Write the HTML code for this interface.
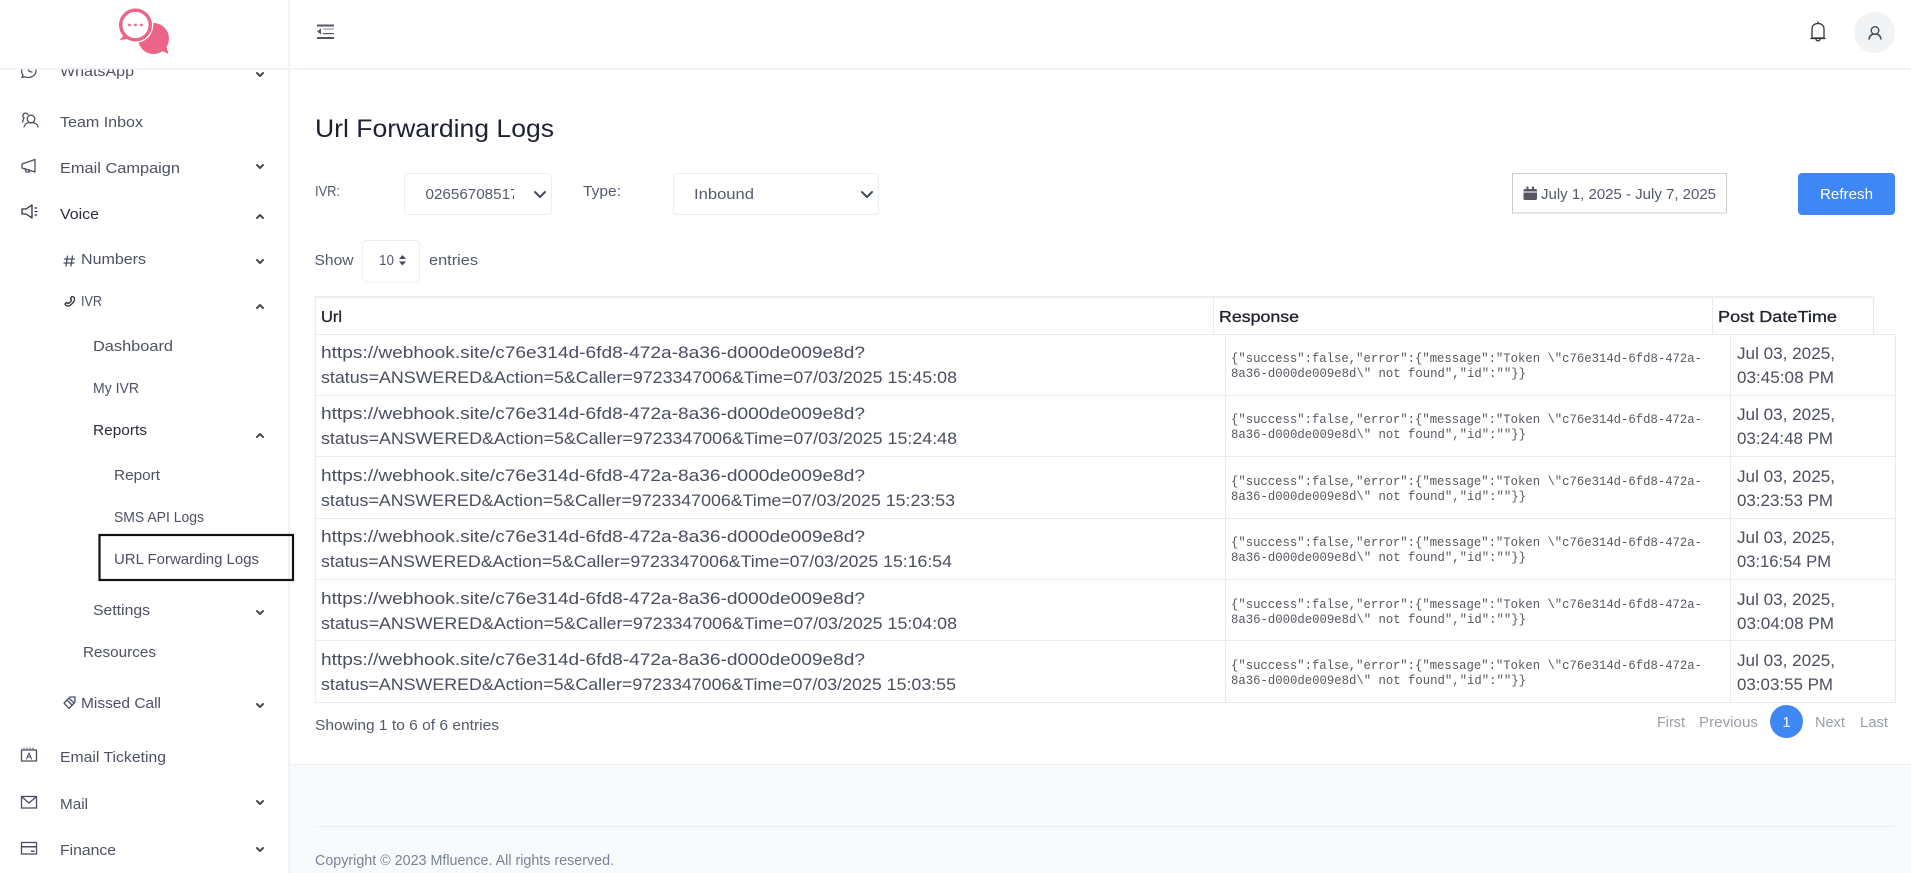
<!DOCTYPE html>
<html lang="en">
<head>
<meta charset="utf-8">
<title>Url Forwarding Logs</title>
<style>
html,body{margin:0;padding:0;width:1911px;height:873px;overflow:hidden;background:#fff}
svg{display:block}
text{font-family:"Liberation Sans",sans-serif;white-space:pre}
.nav{font-size:15px;fill:#4d5162}
.dark{font-size:15px;fill:#2a2d3a}
.lab{font-size:14.5px;fill:#555a6a}
.url{font-size:16.5px;fill:#4a4e5e}
.mono{font-family:"Liberation Mono",monospace;font-size:12.6px;fill:#55585f}
.th{font-size:16px;fill:#20232e;stroke:#20232e;stroke-width:.3}
.pg{font-size:14.5px;fill:#9a9ea9}
.ic{fill:none;stroke:#4a4f60;stroke-width:1.3;stroke-linecap:round;stroke-linejoin:round}
.ch{fill:none;stroke:#4a4a4a;stroke-width:2;stroke-linecap:round;stroke-linejoin:round}
</style>
</head>
<body>
<svg width="1911" height="873" viewBox="0 0 1911 873" xmlns="http://www.w3.org/2000/svg">
<rect width="1911" height="873" fill="#fff"/>
<!-- main background -->
<rect x="288" y="69" width="1623" height="804" fill="#f9fafc"/>
<rect x="288" y="0" width="2" height="873" fill="#eef2f9"/>
<rect x="290" y="70" width="1621" height="694" rx="4" fill="#fff"/>
<rect x="290" y="764" width="1621" height="1" fill="#eef1f7"/>

<!-- sidebar -->
<g>
<path class="ic" d="M22 67c-1 5 0 7 1 8l-1 2.500 3-.7c5 2 11-1 11-6 0-2-.5-3-1-4M28 68c0 3 2 4 4 4"/>
<text class="nav" x="60" y="76" textLength="74" lengthAdjust="spacingAndGlyphs">WhatsApp</text>
<path class="ch" d="M257 73l3 3 3-3"/>

<circle class="ic" cx="31" cy="119" r="3.800"/>
<path class="ic" d="M24 127c1-4 4-4.500 7-4.500s6 .5 7 4.500M28 114.500c-1-1.500-3-2-4.500-.5-1 1.500-.5 3 .5 4l-1.500 4"/>
<text class="nav" x="60" y="127" textLength="83" lengthAdjust="spacingAndGlyphs">Team Inbox</text>

<path class="ic" d="M22 164l13-4.500v12.500l-13-4zM25 168.500l1 3.500h3.500l-.7-2.500"/>
<text class="nav" x="60" y="173" textLength="120" lengthAdjust="spacingAndGlyphs">Email Campaign</text>
<path class="ch" d="M257 165l3 3 3-3"/>

<path class="ic" d="M22 209h4l6-4v13l-6-4h-4zM35 208h1.500M35 211.500h2M35 215h1.500" style="stroke:#2a2d3a"/>
<text class="dark" x="60" y="219" textLength="39" lengthAdjust="spacingAndGlyphs">Voice</text>
<path class="ch" d="M257 218l3-3 3 3"/>

<path class="ic" d="M67.500 256l-1.500 10M72.500 256l-1.500 10M64.500 259h10M64 263h10"/>
<text class="nav" x="81" y="264" textLength="65" lengthAdjust="spacingAndGlyphs">Numbers</text>
<path class="ch" d="M257 260l3 3 3-3"/>

<path class="ic" d="M65 304c1 2.500 4 2.500 5.500 1 2-1.500 4-4 4-6 0-2-2-3-3-2l-1 1.500 1 1.500c-.5 1.500-2 3-3.500 3.500l-1.500-1z" style="stroke:#2a2d3a"/>
<text class="nav" x="81" y="306" textLength="21" lengthAdjust="spacingAndGlyphs">IVR</text>
<path class="ch" d="M257 308l3-3 3 3"/>

<text class="nav" x="93" y="351" textLength="80" lengthAdjust="spacingAndGlyphs">Dashboard</text>
<text class="nav" x="93" y="393" textLength="46" lengthAdjust="spacingAndGlyphs">My IVR</text>
<text class="dark" x="93" y="435" textLength="54" lengthAdjust="spacingAndGlyphs">Reports</text>
<path class="ch" d="M257 437l3-3 3 3"/>
<text class="nav" x="114" y="480" textLength="46" lengthAdjust="spacingAndGlyphs">Report</text>
<text class="nav" x="114" y="522" textLength="90" lengthAdjust="spacingAndGlyphs">SMS API Logs</text>
<rect x="99.500" y="535" width="193.500" height="45" fill="none" stroke="#111" stroke-width="2.200"/>
<text class="nav" x="114" y="564" textLength="145" lengthAdjust="spacingAndGlyphs">URL Forwarding Logs</text>
<text class="nav" x="93" y="615" textLength="57" lengthAdjust="spacingAndGlyphs">Settings</text>
<path class="ch" d="M257 611l3 3 3-3"/>
<text class="nav" x="83" y="657" textLength="73" lengthAdjust="spacingAndGlyphs">Resources</text>

<path class="ic" d="M64 703l6-6h5v5l-6 6.500zM67 700l5 5M69 698l4.500 4.500"/>
<text class="nav" x="81" y="708" textLength="80" lengthAdjust="spacingAndGlyphs">Missed Call</text>
<path class="ch" d="M257 704l3 3 3-3"/>

<rect class="ic" x="21.500" y="750" width="15" height="11" style="stroke-linecap:butt"/>
<path class="ic" d="M24 748v2M27 748v2M30 748v2M33 748v2" style="stroke-width:1"/>
<path class="ic" d="M26.500 759l2.500-6 2.500 6M27.500 757h3" style="stroke-width:1"/>
<text class="nav" x="60" y="762" textLength="106" lengthAdjust="spacingAndGlyphs">Email Ticketing</text>

<rect class="ic" x="21.500" y="796.500" width="15" height="11.500" style="stroke-linecap:butt;stroke-linejoin:miter"/>
<path class="ic" d="M22 797l7 6 7-6"/>
<text class="nav" x="60" y="809" textLength="28" lengthAdjust="spacingAndGlyphs">Mail</text>
<path class="ch" d="M257 801l3 3 3-3"/>

<rect class="ic" x="21.500" y="842.500" width="15" height="11.500" style="stroke-linecap:butt;stroke-linejoin:miter"/>
<path d="M21 846h16v1.500H21zM31 850.500h3.500V852H31z" fill="#4a4f60"/>
<text class="nav" x="60" y="855" textLength="56" lengthAdjust="spacingAndGlyphs">Finance</text>
<path class="ch" d="M257 848l3 3 3-3"/>
</g>

<!-- header -->
<rect x="0" y="0" width="1911" height="68" fill="#fff"/>
<rect x="0" y="68" width="1911" height="1.500" fill="#edf2f9"/>
<rect x="288" y="0" width="2" height="68" fill="#f1f4fa"/>

<!-- logo -->
<circle cx="153.500" cy="38.500" r="15.500" fill="#ec6488"/>
<path d="M160 50l8.500 4-2-7z" fill="#ec6488"/>
<circle cx="135.500" cy="25" r="17.800" fill="#fff"/>
<circle cx="135.500" cy="25" r="14.800" fill="#fff" stroke="#ec6488" stroke-width="3.400"/>
<path d="M124 35l-4.500 5 8-1z" fill="#ec6488"/>
<circle cx="129.500" cy="25" r="1.400" fill="#ec6488"/><circle cx="135.500" cy="25" r="1.400" fill="#ec6488"/><circle cx="141.500" cy="25" r="1.400" fill="#ec6488"/>

<!-- hamburger -->
<rect x="317" y="24.500" width="17" height="2" fill="#555766"/>
<rect x="323" y="28.500" width="11" height="1.200" fill="#9a9ca6"/>
<rect x="323" y="33" width="11" height="1.200" fill="#555766"/>
<rect x="317" y="37" width="17" height="2" fill="#555766"/>
<path d="M321 28.500v6l-4-3z" fill="#555766"/>

<!-- bell -->
<path d="M1812 38V29c0-3.500 2.500-5.500 6-5.500s6 2 6 5.500v9zM1811 38.500h14M1816 39.500c.5 1.800 3.500 1.800 4 0M1818 23v-1" fill="none" stroke="#333" stroke-width="1.300" stroke-linecap="round" stroke-linejoin="round"/>
<!-- avatar -->
<circle cx="1874.500" cy="32.500" r="20.500" fill="#f1f3f5"/>
<circle cx="1875" cy="30.500" r="3.800" fill="none" stroke="#444a58" stroke-width="1.400"/>
<path d="M1869 39c.6-3.500 3-5 6-5s5.400 1.500 6 5" fill="none" stroke="#444a58" stroke-width="1.400" stroke-linecap="round"/>

<!-- title -->
<text x="315" y="137" font-size="25" fill="#1e2130" textLength="239" lengthAdjust="spacingAndGlyphs">Url Forwarding Logs</text>

<!-- filters -->
<text class="lab" x="315" y="196" textLength="25" lengthAdjust="spacingAndGlyphs">IVR:</text>
<rect x="404.500" y="173.500" width="147" height="41" rx="4" fill="#fff" stroke="#e9edf4"/>
<svg x="425" y="180" width="89" height="30" viewBox="425 180 89 30"><text class="lab" x="425.500" y="199" textLength="93" lengthAdjust="spacingAndGlyphs">02656708517</text></svg>
<path d="M535 192l5 5 5-5" fill="none" stroke="#444a58" stroke-width="2" stroke-linecap="round" stroke-linejoin="round"/>
<text class="lab" x="583" y="196" textLength="38" lengthAdjust="spacingAndGlyphs">Type:</text>
<rect x="673.500" y="173.500" width="205" height="41" rx="4" fill="#fff" stroke="#e9edf4"/>
<text class="lab" x="694" y="199" textLength="60" lengthAdjust="spacingAndGlyphs">Inbound</text>
<path d="M862 192l5 5 5-5" fill="none" stroke="#444a58" stroke-width="2" stroke-linecap="round" stroke-linejoin="round"/>

<rect x="1512.500" y="173.500" width="214" height="39.500" fill="#fff" stroke="#ccc"/>
<path d="M1523.500 190.500a1.500 1.500 0 0 1 1.500-1.500h1.500v-2.500h2V189h3.500v-2.500h2V189h1.500a1.500 1.500 0 0 1 1.500 1.500v1h-13.500zM1523.500 192.500H1537v6a1.500 1.500 0 0 1-1.500 1.500H1525a1.500 1.500 0 0 1-1.500-1.500z" fill="#55565f"/>
<text class="lab" x="1541" y="199" textLength="175" lengthAdjust="spacingAndGlyphs">July 1, 2025 - July 7, 2025</text>

<rect x="1798" y="173" width="97" height="42" rx="4" fill="#3f87f5"/>
<text x="1820" y="199" font-size="15" fill="#fff" textLength="53" lengthAdjust="spacingAndGlyphs">Refresh</text>

<!-- length -->
<text class="lab" x="314.500" y="265" textLength="39" lengthAdjust="spacingAndGlyphs">Show</text>
<rect x="362.500" y="240.500" width="57" height="41.500" rx="4" fill="#fff" stroke="#e9edf4"/>
<text class="lab" x="379" y="265" textLength="15" lengthAdjust="spacingAndGlyphs">10</text>
<path d="M399 259h7l-3.500-4zM399 261.500h7l-3.500 4z" fill="#444a58"/>
<text class="lab" x="429" y="265" textLength="49" lengthAdjust="spacingAndGlyphs">entries</text>

<!-- table -->
<rect x="315" y="296" width="1558.500" height="2" fill="#eeeeee"/>
<g fill="#e9ecef">
<rect x="315" y="297" width="1" height="405"/>
<rect x="1213" y="297" width="1" height="37"/>
<rect x="1712" y="297" width="1" height="37"/>
<rect x="1873" y="297" width="1" height="37"/>
<rect x="1225" y="334" width="1" height="368"/>
<rect x="1730" y="334" width="1" height="368"/>
<rect x="1895" y="334" width="1" height="368"/>
<rect x="315" y="334" width="1581" height="1"/>
<rect x="315" y="395" width="1581" height="1"/>
<rect x="315" y="456" width="1581" height="1"/>
<rect x="315" y="518" width="1581" height="1"/>
<rect x="315" y="579" width="1581" height="1"/>
<rect x="315" y="640" width="1581" height="1"/>
<rect x="315" y="702" width="1581" height="1"/>
</g>
<text class="th" x="321" y="322" textLength="21" lengthAdjust="spacingAndGlyphs">Url</text>
<text class="th" x="1219" y="322" textLength="80" lengthAdjust="spacingAndGlyphs">Response</text>
<text class="th" x="1718" y="322" textLength="119" lengthAdjust="spacingAndGlyphs">Post DateTime</text>

<g>
<text class="url" x="321" y="358" textLength="544" lengthAdjust="spacingAndGlyphs">https://webhook.site/c76e314d-6fd8-472a-8a36-d000de009e8d?</text>
<text class="url" x="321" y="383" textLength="636" lengthAdjust="spacingAndGlyphs">status=ANSWERED&amp;Action=5&amp;Caller=9723347006&amp;Time=07/03/2025 15:45:08</text>
<text class="mono" x="1231" y="362" textLength="471" lengthAdjust="spacingAndGlyphs">{"success":false,"error":{"message":"Token \"c76e314d-6fd8-472a-</text>
<text class="mono" x="1231" y="377" textLength="295" lengthAdjust="spacingAndGlyphs">8a36-d000de009e8d\" not found","id":""}}</text>
<text class="url" x="1737" y="359" textLength="98" lengthAdjust="spacingAndGlyphs">Jul 03, 2025,</text>
<text class="url" x="1737" y="383" textLength="97" lengthAdjust="spacingAndGlyphs">03:45:08 PM</text>
</g>
<g transform="translate(0,61)">
<text class="url" x="321" y="358" textLength="544" lengthAdjust="spacingAndGlyphs">https://webhook.site/c76e314d-6fd8-472a-8a36-d000de009e8d?</text>
<text class="url" x="321" y="383" textLength="636" lengthAdjust="spacingAndGlyphs">status=ANSWERED&amp;Action=5&amp;Caller=9723347006&amp;Time=07/03/2025 15:24:48</text>
<text class="mono" x="1231" y="362" textLength="471" lengthAdjust="spacingAndGlyphs">{"success":false,"error":{"message":"Token \"c76e314d-6fd8-472a-</text>
<text class="mono" x="1231" y="377" textLength="295" lengthAdjust="spacingAndGlyphs">8a36-d000de009e8d\" not found","id":""}}</text>
<text class="url" x="1737" y="359" textLength="98" lengthAdjust="spacingAndGlyphs">Jul 03, 2025,</text>
<text class="url" x="1737" y="383" textLength="96" lengthAdjust="spacingAndGlyphs">03:24:48 PM</text>
</g>
<g transform="translate(0,123)">
<text class="url" x="321" y="358" textLength="544" lengthAdjust="spacingAndGlyphs">https://webhook.site/c76e314d-6fd8-472a-8a36-d000de009e8d?</text>
<text class="url" x="321" y="383" textLength="634" lengthAdjust="spacingAndGlyphs">status=ANSWERED&amp;Action=5&amp;Caller=9723347006&amp;Time=07/03/2025 15:23:53</text>
<text class="mono" x="1231" y="362" textLength="471" lengthAdjust="spacingAndGlyphs">{"success":false,"error":{"message":"Token \"c76e314d-6fd8-472a-</text>
<text class="mono" x="1231" y="377" textLength="295" lengthAdjust="spacingAndGlyphs">8a36-d000de009e8d\" not found","id":""}}</text>
<text class="url" x="1737" y="359" textLength="98" lengthAdjust="spacingAndGlyphs">Jul 03, 2025,</text>
<text class="url" x="1737" y="383" textLength="96" lengthAdjust="spacingAndGlyphs">03:23:53 PM</text>
</g>
<g transform="translate(0,184)">
<text class="url" x="321" y="358" textLength="544" lengthAdjust="spacingAndGlyphs">https://webhook.site/c76e314d-6fd8-472a-8a36-d000de009e8d?</text>
<text class="url" x="321" y="383" textLength="631" lengthAdjust="spacingAndGlyphs">status=ANSWERED&amp;Action=5&amp;Caller=9723347006&amp;Time=07/03/2025 15:16:54</text>
<text class="mono" x="1231" y="362" textLength="471" lengthAdjust="spacingAndGlyphs">{"success":false,"error":{"message":"Token \"c76e314d-6fd8-472a-</text>
<text class="mono" x="1231" y="377" textLength="295" lengthAdjust="spacingAndGlyphs">8a36-d000de009e8d\" not found","id":""}}</text>
<text class="url" x="1737" y="359" textLength="98" lengthAdjust="spacingAndGlyphs">Jul 03, 2025,</text>
<text class="url" x="1737" y="383" textLength="94" lengthAdjust="spacingAndGlyphs">03:16:54 PM</text>
</g>
<g transform="translate(0,246)">
<text class="url" x="321" y="358" textLength="544" lengthAdjust="spacingAndGlyphs">https://webhook.site/c76e314d-6fd8-472a-8a36-d000de009e8d?</text>
<text class="url" x="321" y="383" textLength="636" lengthAdjust="spacingAndGlyphs">status=ANSWERED&amp;Action=5&amp;Caller=9723347006&amp;Time=07/03/2025 15:04:08</text>
<text class="mono" x="1231" y="362" textLength="471" lengthAdjust="spacingAndGlyphs">{"success":false,"error":{"message":"Token \"c76e314d-6fd8-472a-</text>
<text class="mono" x="1231" y="377" textLength="295" lengthAdjust="spacingAndGlyphs">8a36-d000de009e8d\" not found","id":""}}</text>
<text class="url" x="1737" y="359" textLength="98" lengthAdjust="spacingAndGlyphs">Jul 03, 2025,</text>
<text class="url" x="1737" y="383" textLength="97" lengthAdjust="spacingAndGlyphs">03:04:08 PM</text>
</g>
<g transform="translate(0,307)">
<text class="url" x="321" y="358" textLength="544" lengthAdjust="spacingAndGlyphs">https://webhook.site/c76e314d-6fd8-472a-8a36-d000de009e8d?</text>
<text class="url" x="321" y="383" textLength="635" lengthAdjust="spacingAndGlyphs">status=ANSWERED&amp;Action=5&amp;Caller=9723347006&amp;Time=07/03/2025 15:03:55</text>
<text class="mono" x="1231" y="362" textLength="471" lengthAdjust="spacingAndGlyphs">{"success":false,"error":{"message":"Token \"c76e314d-6fd8-472a-</text>
<text class="mono" x="1231" y="377" textLength="295" lengthAdjust="spacingAndGlyphs">8a36-d000de009e8d\" not found","id":""}}</text>
<text class="url" x="1737" y="359" textLength="98" lengthAdjust="spacingAndGlyphs">Jul 03, 2025,</text>
<text class="url" x="1737" y="383" textLength="96" lengthAdjust="spacingAndGlyphs">03:03:55 PM</text>
</g>

<!-- info / pagination -->
<text class="lab" x="315" y="730" textLength="184" lengthAdjust="spacingAndGlyphs">Showing 1 to 6 of 6 entries</text>
<text class="pg" x="1657" y="727" textLength="28" lengthAdjust="spacingAndGlyphs">First</text>
<text class="pg" x="1699" y="727" textLength="59" lengthAdjust="spacingAndGlyphs">Previous</text>
<circle cx="1786.500" cy="721.500" r="16.500" fill="#3f87f5"/>
<text x="1786.500" y="727" font-size="14.500" fill="#fff" text-anchor="middle">1</text>
<text class="pg" x="1815" y="727" textLength="30" lengthAdjust="spacingAndGlyphs">Next</text>
<text class="pg" x="1860" y="727" textLength="28" lengthAdjust="spacingAndGlyphs">Last</text>

<!-- footer -->
<rect x="315" y="826" width="1580" height="1" fill="#eceef4"/>
<text x="315" y="865" font-size="14.500" fill="#7a8296" textLength="299" lengthAdjust="spacingAndGlyphs">Copyright © 2023 Mfluence. All rights reserved.</text>
</svg>
</body>
</html>
